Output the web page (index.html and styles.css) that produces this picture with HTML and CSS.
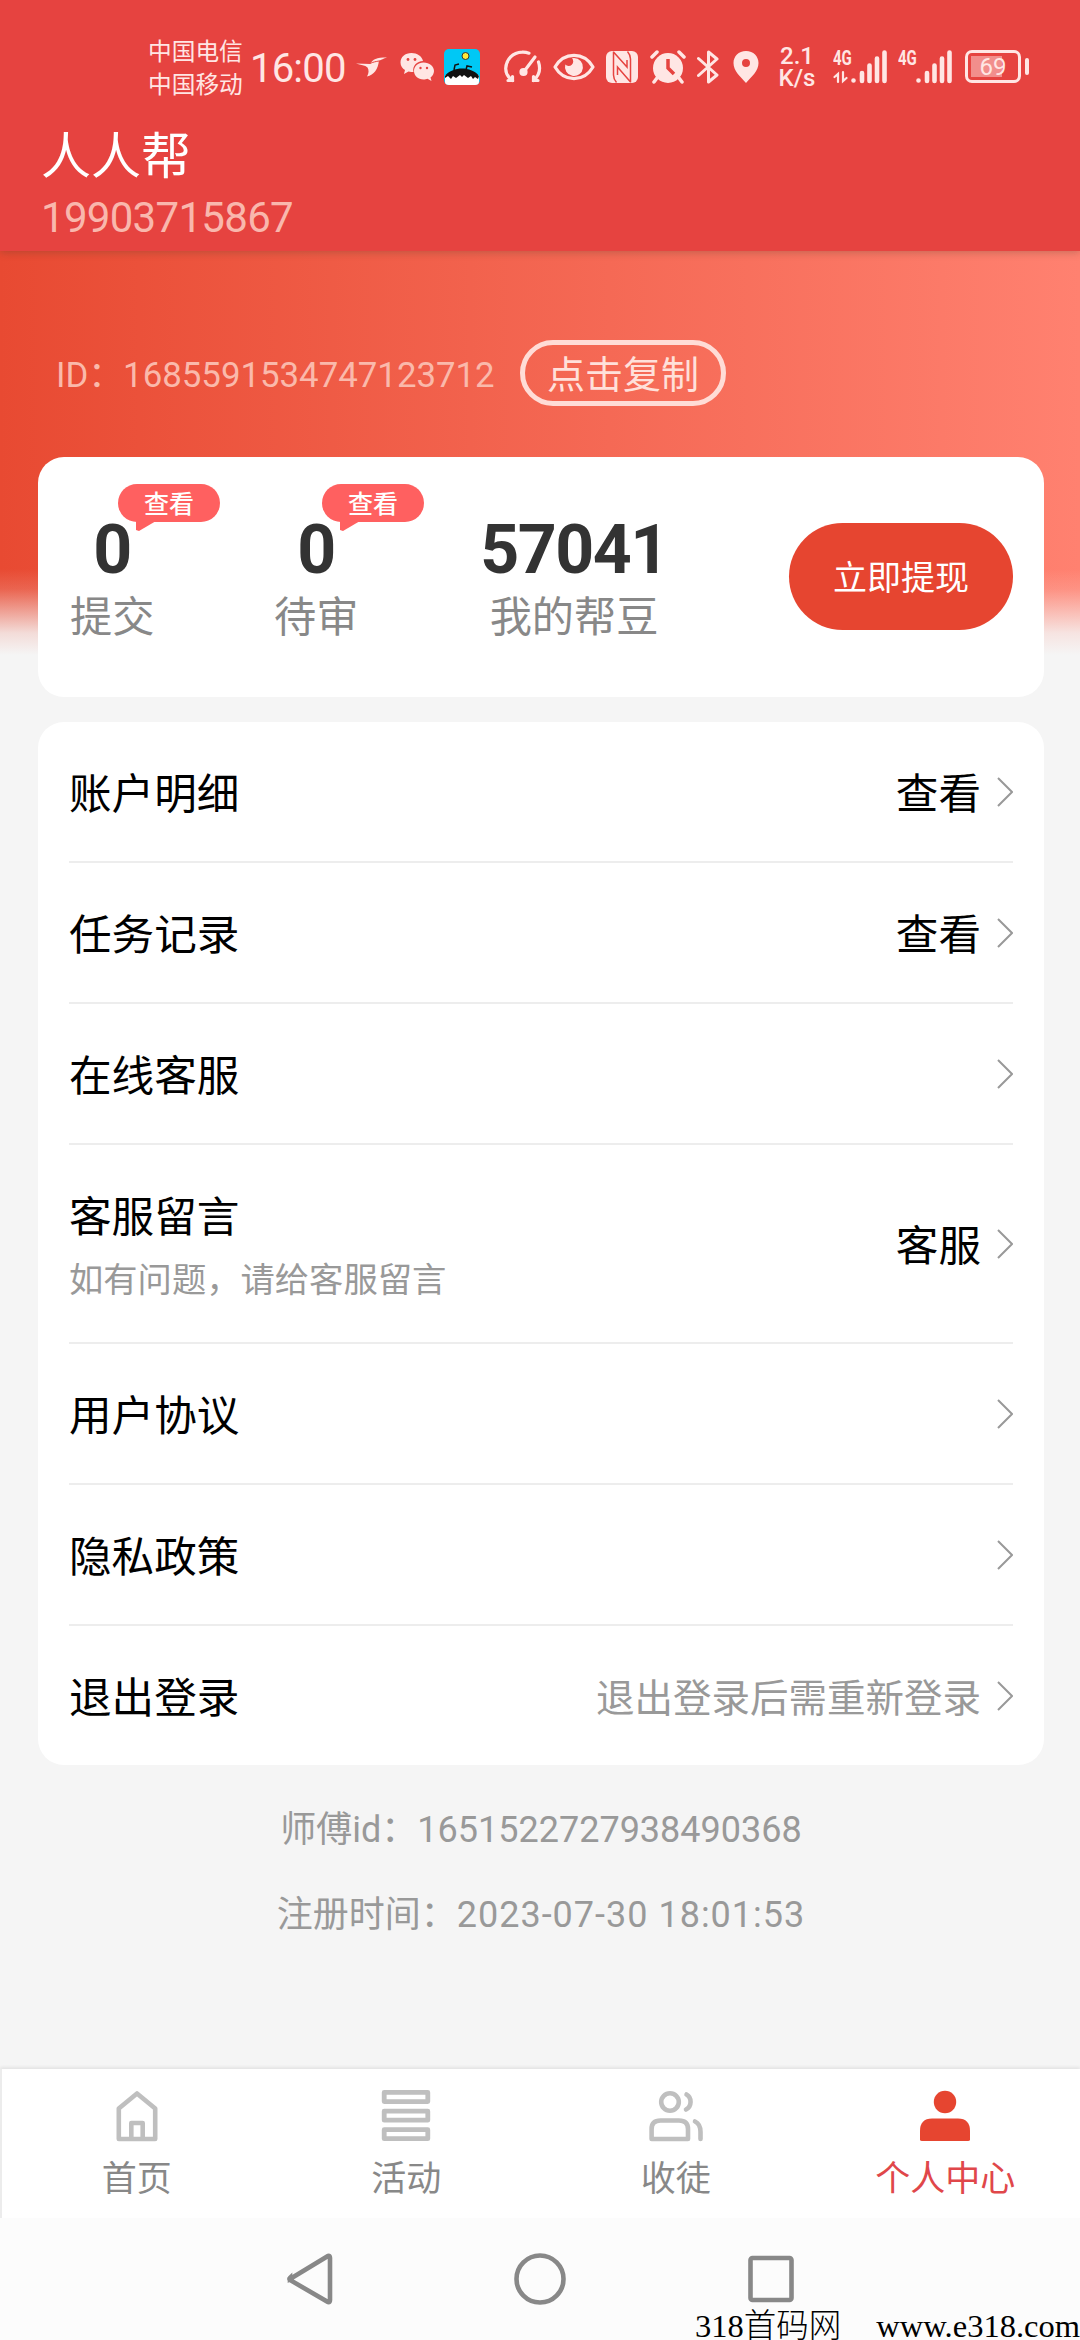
FILE: index.html
```html
<!DOCTYPE html>
<html lang="zh-CN">
<head>
    <meta charset="UTF-8">
    <meta name="viewport" content="width=device-width, initial-scale=1.0">
    <title>个人中心</title>
    <link rel="stylesheet" href="styles.css">
</head>
<body>
    <header class="header">
        <!-- Status bar -->
        <div class="status-bar">
            <div class="carrier">
                <div>中国电信</div>
                <div>中国移动</div>
            </div>
            <div class="time">16:00</div>
            <svg class="icon-bird" width="32" height="20" viewBox="0 0 32 20"><path fill="#ffe6e4" d="M0 6.5 14 7C17 2 20 0.5 31 0.5 27 1.5 26 3 23 3.5 22 12 18 18 11 19.5 13 16 13 13 11.500 10.500 9 8 5 8 0 6.500Z"/><path d="M14 6.500C17 5 20 4.500 23 4" fill="none" stroke="#e64340" stroke-width="1"/></svg>
            <svg class="icon-wechat" width="34" height="30" viewBox="0 0 34 30">
                <path fill="#ffe6e4" d="M11.500 1C5 1 .5 5 .5 10.500c0 3.500 2 6 4.500 7.500L4 22l4.500-2.500c2 .5 3.500.5 5 .5C12 14 17 9 23 9 22 4 17 1 11.500 1Z"/>
                <path fill="#ffe6e4" d="M23.500 10.500c-5.500 0-9.500 3.700-9.500 8.500s4 8.500 9.500 8.500c1.500 0 3-.2 4-.7L31.500 29l-1-3.500c2-1.500 3.500-4 3.500-6.500 0-4.800-4.500-8.500-10.500-8.500Z"/>
                <g fill="#e64340"><circle cx="8" cy="7.500" r="1.400"/><circle cx="15" cy="7.500" r="1.400"/><circle cx="20.500" cy="16" r="1.200"/><circle cx="27" cy="16" r="1.200"/></g>
            </svg>
            <svg class="icon-app" width="36" height="36" viewBox="0 0 36 36">
                <rect width="36" height="36" rx="5" fill="#00c8f5"/>
                <path fill="#fff" d="M1 26h34v7q0 3-4 3H5q-4 0-4-3Z"/>
                <path fill="#111" d="M1 27C4 22 12 19.500 18 19.500S32 22 35 27l-1 3-3-2-2 2-2-3-3 2-4-3-2 2-2-2-4 3-3-2-2 3-3-3-3 2Z"/>
                <path d="M10 21 11 16 15 15M22 21 23 17 28 18" fill="none" stroke="#111" stroke-width="1.500"/>
                <circle cx="21.500" cy="7" r="3.500" fill="#ffea3a" stroke="#333" stroke-width="1"/>
            </svg>
            <svg class="icon-speed" width="38" height="34" viewBox="0 0 38 34" fill="none" stroke="#ffe6e4" stroke-width="3.200" stroke-linecap="round">
                <path d="M8.500 30.500C3.500 27 1.700 23 1.700 18.500 2.200 9 9 2.500 18 2.200 20.500 2 23 2.500 25 3.200"/>
                <path d="M34.500 12C36.500 18 35.800 25 29.500 30.500M4 30.500h4.500v-4M34 30.500h-4.500v-4"/>
                <path d="M31 7 20 21.500"/><circle cx="19.500" cy="22" r="2.500" fill="#ffe6e4"/>
            </svg>
            <svg class="icon-eye" width="42" height="28" viewBox="0 0 42 28">
                <path d="M2 14C11-1.500 31-1.500 40 14 31 29.500 11 29.500 2 14Z" fill="none" stroke="#ffe6e4" stroke-width="3.200" stroke-linejoin="round"/>
                <path d="M21 5a9 9 0 1 1-8.700 6.500A4.500 4.500 0 1 0 19 5.200Z" fill="#ffe6e4"/>
            </svg>
            <svg class="icon-nfc" width="32" height="32" viewBox="0 0 32 32">
                <rect width="32" height="32" rx="6" fill="#ffe6e4"/>
                <path d="M7.500 0.500V24Q7.500 28 10.500 31.500M7.500 1 21 16V9M24.500 31.500V8Q24.500 4 21.500 0.500M24.500 31 11.500 16V24" fill="none" stroke="#e64340" stroke-width="1.500"/>
            </svg>
            <svg class="icon-alarm" width="36" height="34" viewBox="0 0 36 34">
                <circle cx="18" cy="18" r="15" fill="#ffe6e4"/>
                <path d="M2 7 7 2M34 7 29 2M7 28 4 32M29 28 32 32" stroke="#ffe6e4" stroke-width="3.500" stroke-linecap="round"/>
                <path d="M18 9V18L24 24" fill="none" stroke="#e64340" stroke-width="3.500"/>
            </svg>
            <svg class="icon-bt" width="22" height="36" viewBox="0 0 22 36"><path d="M1.500 9.500 20 26 11.500 33V3L20 10 1.500 26.500" fill="none" stroke="#ffe6e4" stroke-width="3" stroke-linejoin="round" stroke-linecap="round"/></svg>
            <svg class="icon-pin" width="26" height="32" viewBox="0 0 26 32"><path fill="#ffe6e4" fill-rule="evenodd" d="M13 0C5.500 0 .5 5.500.5 12 .5 20 7 25 13 32 19 25 25.500 20 25.500 12 25.500 5.500 20.500 0 13 0Zm0 8a4 4 0 1 1 0 8 4 4 0 0 1 0-8Z"/></svg>
            <div class="net-speed">
                <div>2.1</div>
                <div>K/s</div>
            </div>
            <div class="signal">
                <span class="net-type">4G</span>
                <svg width="54" height="34" viewBox="0 0 54 34" stroke="#ffe6e4" stroke-linecap="round">
                    <path d="M20.500 30.500V30.500M29 23V31M36.500 15.500V31M44 8.500V31M51.500 2.500V31" stroke-width="4.600"/>
                    <path d="M1.500 27 5 24V32M10 22V31L13.500 28" stroke-width="2.200" fill="none"/>
                </svg>
            </div>
            <div class="signal signal-2">
                <span class="net-type">4G</span>
                <svg width="54" height="34" viewBox="0 0 54 34" stroke="#ffe6e4" stroke-linecap="round">
                    <path d="M20.500 30.500V30.500M29 23V31M36.500 15.500V31M44 8.500V31M51.500 2.500V31" stroke-width="4.600"/>
                </svg>
            </div>
            <div class="battery"><span>69</span></div>
        </div>
        <div class="app-name">人人帮</div>
        <div class="phone">19903715867</div>
    </header>

    <main class="content">
        <section class="hero">
            <div class="user-id">ID：<span>1685591534747123712</span></div>
            <button class="copy-btn">点击复制</button>
        </section>

        <section class="card stats">
            <div class="stat">
                <div class="num">0</div>
                <div class="label">提交</div>
                <span class="bubble">查看</span>
            </div>
            <div class="stat stat-wait">
                <div class="num">0</div>
                <div class="label">待审</div>
                <span class="bubble">查看</span>
            </div>
            <div class="stat stat-beans">
                <div class="num">57041</div>
                <div class="label">我的帮豆</div>
            </div>
            <button class="cash-btn">立即提现</button>
        </section>

        <section class="card menu">
            <div class="row">
                <div class="title">账户明细</div>
                <div class="value">查看</div>
                <svg class="arrow" width="16" height="30" viewBox="0 0 16 30"><path d="M1 1 15 15 1 29"/></svg>
            </div>
            <div class="row">
                <div class="title">任务记录</div>
                <div class="value">查看</div>
                <svg class="arrow" width="16" height="30" viewBox="0 0 16 30"><path d="M1 1 15 15 1 29"/></svg>
            </div>
            <div class="row">
                <div class="title">在线客服</div>
                <svg class="arrow" width="16" height="30" viewBox="0 0 16 30"><path d="M1 1 15 15 1 29"/></svg>
            </div>
            <div class="row row-tall">
                <div class="title">客服留言
                    <div class="note">如有问题，请给客服留言</div>
                </div>
                <div class="value">客服</div>
                <svg class="arrow" width="16" height="30" viewBox="0 0 16 30"><path d="M1 1 15 15 1 29"/></svg>
            </div>
            <div class="row">
                <div class="title">用户协议</div>
                <svg class="arrow" width="16" height="30" viewBox="0 0 16 30"><path d="M1 1 15 15 1 29"/></svg>
            </div>
            <div class="row">
                <div class="title">隐私政策</div>
                <svg class="arrow" width="16" height="30" viewBox="0 0 16 30"><path d="M1 1 15 15 1 29"/></svg>
            </div>
            <div class="row">
                <div class="title">退出登录</div>
                <div class="value value-muted">退出登录后需重新登录</div>
                <svg class="arrow" width="16" height="30" viewBox="0 0 16 30"><path d="M1 1 15 15 1 29"/></svg>
            </div>
        </section>

        <div class="info">
            <p>师傅id：<span>1651522727938490368</span></p>
            <p>注册时间：<span class="date">2023-07-30 18:01:53</span></p>
        </div>
    </main>

    <!-- Tab bar -->
    <nav class="tab-bar">
        <a class="tab">
            <svg width="54" height="54" viewBox="0 0 54 54" fill="none" stroke="#bfbfbf" stroke-width="4.600" stroke-linejoin="round"><path d="M8.800 50V19.500L27 4.500 45.200 19.500V50ZM21.300 50V34H32.700V50"/></svg>
            <span>首页</span>
        </a>
        <a class="tab">
            <svg width="54" height="54" viewBox="0 0 54 54" fill="none" stroke="#bfbfbf" stroke-width="4.800" stroke-linejoin="round"><path d="M5.200 3.400H48.800V12.600H5.200ZM5.200 22.200H48.800V31.200H5.200ZM5.200 40.700H48.800V49.700H5.200Z"/></svg>
            <span>活动</span>
        </a>
        <a class="tab">
            <svg width="54" height="54" viewBox="0 0 54 54" fill="none" stroke="#bfbfbf" stroke-width="4.600" stroke-linejoin="round" stroke-linecap="round"><circle cx="21" cy="13" r="8.800"/><path d="M2.600 50V40Q2.600 31.500 11.500 31.500H30Q39 31.500 39 40V50ZM37.500 5.500C43 8.500 43 17.500 37 20.500M46 32.500Q51.500 35 51.500 43V50"/></svg>
            <span>收徒</span>
        </a>
        <a class="tab active">
            <svg width="54" height="54" viewBox="0 0 54 54" fill="#e64530"><circle cx="27" cy="13" r="11.200"/><path d="M2 50.500V42Q2 29.500 14 29.500H40Q52 29.500 52 42V50.500Q52 52 50 52H4Q2 52 2 50.500Z"/></svg>
            <span>个人中心</span>
        </a>
    </nav>

    <!-- System buttons -->
    <footer class="sys-nav">
        <svg width="46" height="52" viewBox="0 0 46 52"><path d="M3 26 41 3Q43 2.500 43 5V47Q43 49.500 41 49L3 27Q2 26 3 25Z"/></svg>
        <svg width="52" height="52" viewBox="0 0 52 52"><circle cx="26" cy="26" r="23.500"/></svg>
        <svg width="48" height="52" viewBox="0 0 48 52"><rect x="3.500" y="5" width="41" height="42" rx="2"/></svg>
        <div class="watermark"><span>318首码网</span><span>www.e318.com</span></div>
    </footer>
</body>
</html>
```
FILE: styles.css
```css
:root {
    --primary: #e64530;
    --header: #e64340;
    --bg: #f5f5f5;
    --muted: #999;
}
* {
    box-sizing: border-box;
}
body {
    font-family: "Noto Sans CJK SC", sans-serif;
    background: var(--bg);
    width: 1080px;
    height: 2340px;
    margin: 0;
    overflow: hidden;
    display: flex;
    flex-direction: column;
}
button {
    font-family: inherit;
    padding: 0;
}

/* Header */
.header {
    height: 251px;
    flex: none;
    background: var(--header);
    box-shadow: 0 2px 7px rgba(60, 60, 40, 0.25);
    position: relative;
    z-index: 1;
}
.status-bar {
    height: 127px;
    padding: 6px 0 0 148px;
    display: flex;
    align-items: center;
    color: #ffe6e4;
}
.status-bar > * {
    flex: none;
}
.carrier {
    width: 102px;
    font-size: 23.700px;
    line-height: 33px;
}
.time {
    width: 106px;
    padding-top: 4px;
    font-family: Roboto, sans-serif;
    font-size: 40px;
    line-height: 40px;
    letter-spacing: -0.8px;
}
.icon-wechat {
    margin-left: 12px;
}
.icon-app {
    margin-left: 10px;
}
.icon-speed {
    margin-left: 24px;
}
.icon-eye {
    margin-left: 11px;
}
.icon-nfc {
    margin-left: 11px;
}
.icon-alarm {
    margin-left: 12px;
}
.icon-bt {
    margin-left: 11px;
}
.icon-pin {
    margin-left: 14px;
}
.net-speed {
    width: 40px;
    margin-left: 18px;
    font-family: Roboto, sans-serif;
    font-weight: 500;
    font-size: 24px;
    line-height: 22px;
    text-align: center;
}
.signal {
    width: 54px;
    height: 34px;
    margin-left: 16px;
    position: relative;
}
.signal-2 {
    margin-left: 11px;
}
.net-type {
    position: absolute;
    left: 0;
    top: 0;
    font-family: Roboto, sans-serif;
    font-weight: 700;
    font-size: 20px;
    line-height: 16px;
    transform: scaleX(0.75);
    transform-origin: left;
}
.battery {
    width: 56px;
    height: 33px;
    margin-left: 13px;
    border: 3px solid #ffe6e4;
    border-radius: 7px;
    position: relative;
    background: linear-gradient(#f28e8c, #f28e8c) 3px 3px / 31px 21px no-repeat;
    font-family: Roboto, sans-serif;
    font-size: 24px;
    line-height: 28px;
    text-align: center;
}
.battery::after {
    content: "";
    position: absolute;
    right: -11px;
    top: 5px;
    width: 4px;
    height: 17px;
    border-radius: 2px;
    background: #ffe6e4;
}
.app-name {
    padding-left: 41px;
    color: #fff;
    font-size: 50px;
    line-height: 50px;
}
.phone {
    padding-left: 41px;
    margin-top: 16px;
    color: #f9b7ad;
    font-family: Roboto, sans-serif;
    font-size: 42px;
    line-height: 50px;
    letter-spacing: -0.7px;
}

/* Content */
.content {
    flex: 1;
    padding: 0 36px 0 38px;
    background: linear-gradient(to bottom, rgba(245, 245, 245, 0) 318px, rgba(245, 245, 245, 0.15) 338px, rgba(245, 245, 245, 0.85) 382px, var(--bg) 404px), linear-gradient(to right, #e84a32, #ff8170);
}
.hero {
    height: 206px;
    padding: 38px 0 0 18px;
    display: flex;
    align-items: center;
}
.user-id {
    width: 464px;
    padding-top: 3px;
    color: #fab9ab;
    font-family: Roboto, "Noto Sans CJK SC", sans-serif;
    font-size: 34.800px;
    line-height: 50px;
    white-space: nowrap;
}
.copy-btn {
    width: 206px;
    height: 66px;
    border: 5px solid #ffdcd6;
    border-radius: 33px;
    background: none;
    color: #ffe0da;
    font-size: 38px;
    line-height: 50px;
    padding-bottom: 2px;
}
.card {
    background: #fff;
    border-radius: 26px;
}
.stats {
    height: 240px;
    padding: 58px 31px 0 32px;
    display: flex;
    align-items: flex-start;
}
.stat {
    width: 84px;
    position: relative;
    text-align: center;
}
.stat-wait {
    margin-left: 120px;
}
.stat-beans {
    width: 190px;
    margin-left: 121px;
}
.num {
    color: #333;
    font-family: Roboto, sans-serif;
    font-size: 68px;
    font-weight: 700;
    line-height: 70px;
    letter-spacing: -1.500px;
}
.label {
    color: #888;
    font-size: 42.200px;
    line-height: 58px;
    white-space: nowrap;
}
.bubble {
    position: absolute;
    left: 48px;
    top: -31px;
    width: 102px;
    height: 38px;
    border-radius: 19px;
    background: #ff6060;
    color: #fff;
    font-size: 25px;
    font-weight: 500;
    line-height: 36px;
}
.bubble::after {
    content: "";
    position: absolute;
    left: 18px;
    top: 37px;
    width: 20px;
    height: 10px;
    background: #ff6060;
    clip-path: polygon(0 0, 100% 0, 15% 100%, 0 90%);
}
.cash-btn {
    width: 224px;
    height: 107px;
    margin: 8px 0 0 auto;
    padding-bottom: 3px;
    border: none;
    border-radius: 54px;
    background: var(--primary);
    color: #fff;
    font-size: 34px;
}

/* Menu list */
.menu {
    margin-top: 25px;
    padding: 0 31px;
}
.row {
    height: 141px;
    display: flex;
    align-items: center;
    border-bottom: 2px solid #ededed;
}
.row:last-child {
    height: 139px;
    border-bottom: none;
}
.row-tall {
    height: 199px;
}
.title {
    flex: 1;
    font-size: 42.600px;
    line-height: 60px;
    padding-bottom: 2px;
}
.note {
    color: var(--muted);
    font-size: 34.300px;
    line-height: 48px;
    margin-top: 9px;
}
.value {
    font-size: 42.600px;
    line-height: 60px;
    padding-bottom: 2px;
}
.value-muted {
    color: var(--muted);
    font-size: 38.500px;
}
.arrow {
    margin-left: 16px;
    fill: none;
    stroke: #999;
    stroke-width: 2;
}
.info {
    padding-top: 38px;
    color: var(--muted);
    font-family: Roboto, "Noto Sans CJK SC", sans-serif;
    font-size: 36px;
    text-align: center;
}
.info p {
    margin: 0 0 31px;
    line-height: 54px;
}
.info .date {
    letter-spacing: 1px;
}

/* Tab bar */
.tab-bar {
    height: 149px;
    flex: none;
    display: flex;
    background: #fff;
    border-left: 2px solid #ececec;
    box-shadow: 0 -2px 3px rgba(0, 0, 0, 0.07);
}
.tab {
    flex: 1;
    padding-top: 20px;
    display: flex;
    flex-direction: column;
    align-items: center;
    color: #888;
    font-size: 35px;
    line-height: 50px;
}
.tab span {
    margin-top: 8px;
}
.tab.active {
    color: #e0474a;
}
.sys-nav {
    height: 122px;
    flex: none;
    padding: 35px 0 0 287px;
    display: flex;
    gap: 181px;
    background: #fcfcfc;
    position: relative;
}
.sys-nav svg {
    fill: none;
    stroke: #888;
    stroke-width: 4.600;
}
.watermark {
    position: absolute;
    right: 0;
    bottom: -4px;
    display: flex;
    gap: 35px;
    color: #000;
    font-family: "Liberation Serif", "Noto Sans CJK SC", serif;
    font-size: 32.500px;
    font-weight: 300;
    line-height: 36px;
}
```
